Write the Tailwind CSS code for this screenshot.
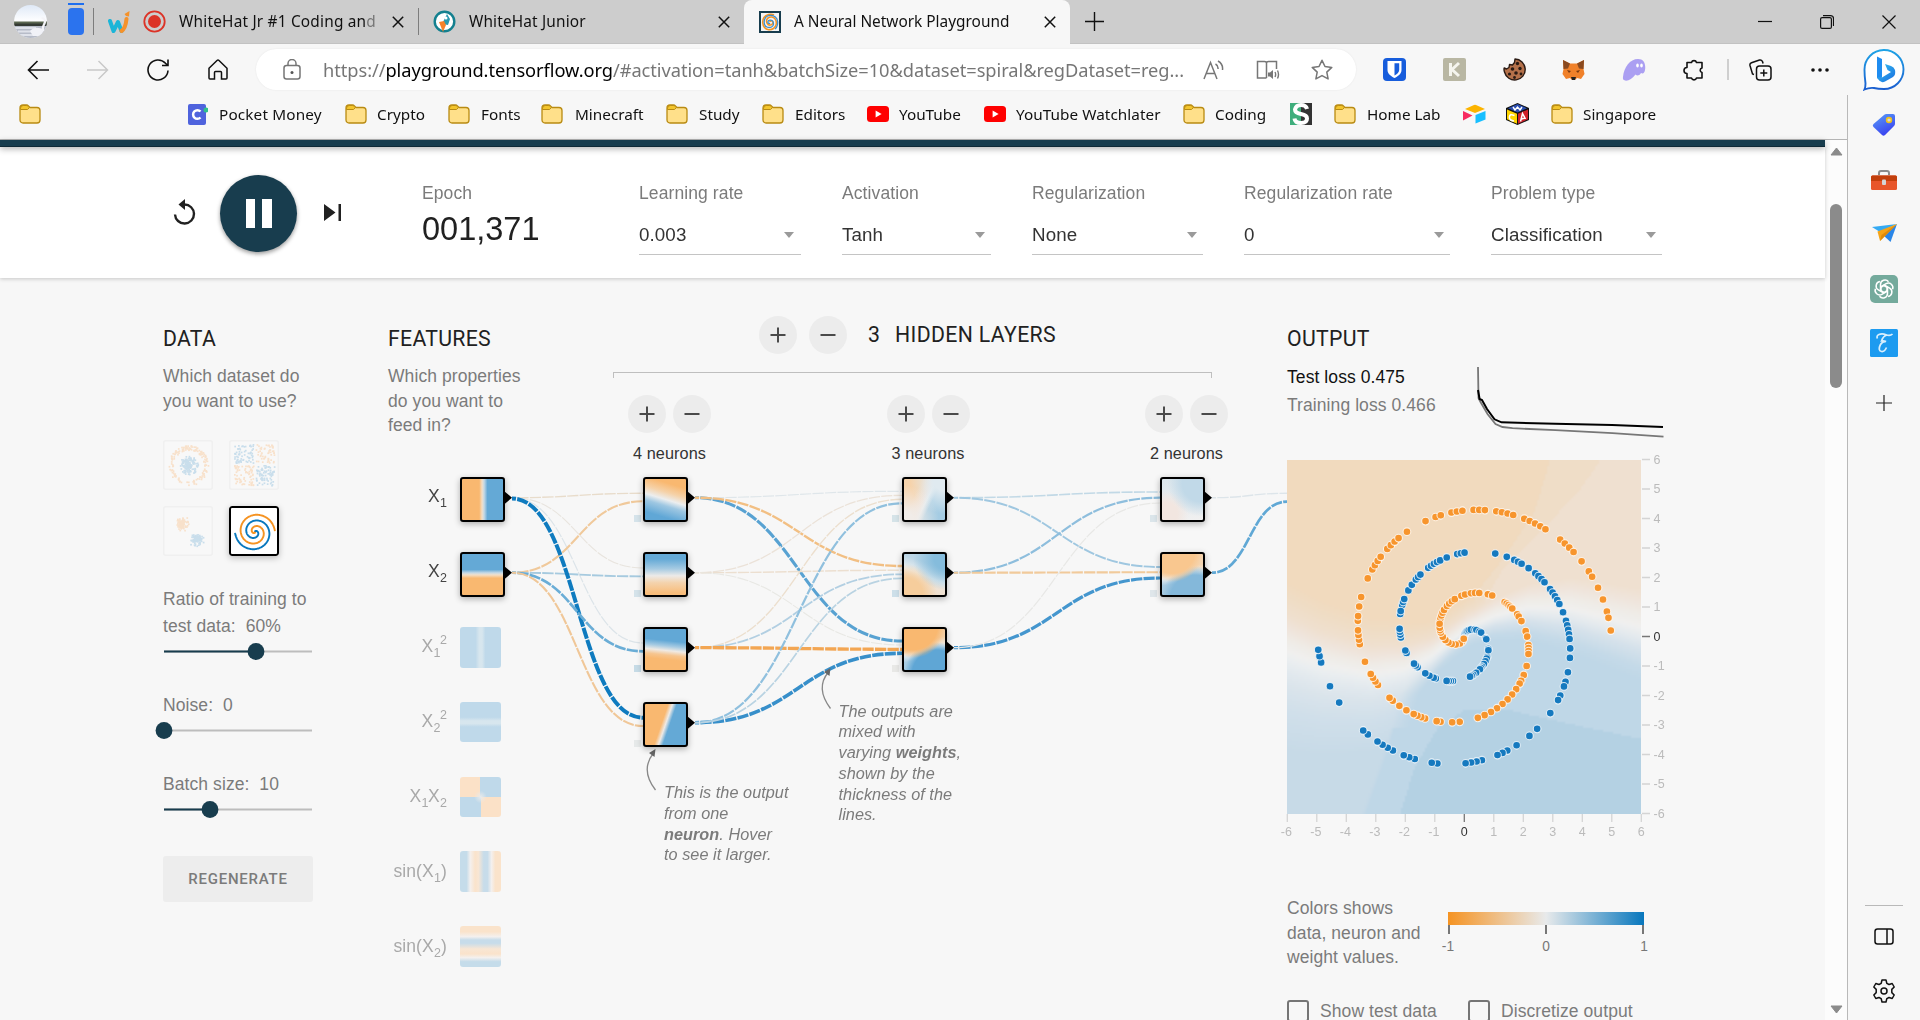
<!DOCTYPE html>
<html lang="en">
<head>
<meta charset="utf-8">
<title>A Neural Network Playground</title>
<script src="https://cdn.jsdelivr.net/npm/@tailwindcss/browser@4"></script>
</head>
<body class="w-[1920px] h-[1020px] overflow-hidden bg-[#f7f7f7] font-['Noto_Sans',sans-serif] text-black">
<svg class="hidden">
  <defs>
    <symbol id="folder" viewBox="0 0 22 20"><path d="M1 4a3 3 0 0 1 3-3h3.500c1 0 1.500.4 2.200 1.100L11 3.500h7a3 3 0 0 1 3 3V16a3 3 0 0 1-3 3H4a3 3 0 0 1-3-3z" fill="#ffe08a" stroke="#b98b12" stroke-width="1.300"/><path d="M1.500 4.200A2.700 2.700 0 0 1 4.200 1.500h3c1 0 1.500.3 2.200 1l1 1.200L8.500 5.500H1.500z" fill="#f3c52c" stroke="#b98b12" stroke-width="1"/></symbol>
    <symbol id="yt" viewBox="0 0 22 16"><rect width="22" height="16" rx="3.500" fill="#f00"/><path d="M8.600 4.500l6 3.500-6 3.500z" fill="#fff"/></symbol>
    <symbol id="x" viewBox="0 0 12 12"><path d="M.8.8l10.400 10.400M11.200.8L.8 11.200" stroke="#111" stroke-width="1.500"/></symbol>
    <symbol id="plus" viewBox="0 0 18 18"><path d="M9 1.500v15M1.500 9h15" stroke="#4a4a4a" stroke-width="2"/></symbol>
    <symbol id="minus" viewBox="0 0 18 18"><path d="M1.500 9h15" stroke="#4a4a4a" stroke-width="2"/></symbol>
    <symbol id="caret" viewBox="0 0 10 6"><path d="M0 0h10L5 6z" fill="#9a9a9a"/></symbol>
  </defs>
</svg>
<div class="flex flex-col h-full">

  <!-- Tab strip -->
  <header class="flex items-center h-[44px] bg-[#cdcdcd] text-[15.4px] shrink-0 border-b border-[#c2c2c2] whitespace-nowrap text-[#111]">
    <svg class="ml-[14px] w-[33px] h-[33px] shrink-0" viewBox="0 0 33 33"><defs><clipPath id="av"><circle cx="16.500" cy="16.500" r="16.500"/></clipPath><linearGradient id="sky" x2="0" y2="1"><stop offset="0" stop-color="#dfe9f7"/><stop offset=".5" stop-color="#fff"/></linearGradient></defs><g clip-path="url(#av)"><rect width="33" height="33" fill="url(#sky)"/><path d="M0 16.500h33v3H0z" fill="#5a6650"/><path d="M0 18.500h33v2.500H0z" fill="#343a33"/><rect y="21" width="33" height="14" fill="#b7bcc8"/><path d="M0 23h22M4 26.500h24M3 30h24" stroke="#dfe2ea" stroke-width="2"/><path d="M27.500 13c3.500 0 4 3 3 5.500s-3 4.500-1 7.500" stroke="#f4f4f8" stroke-width="2.200" fill="none"/><path d="M16 26c3-4 9-4.500 14-1l-3 6h-8z" fill="#f1f2f7"/></g></svg>
    <svg class="ml-[21px] mt-[-5px] w-[16px] h-[33px] shrink-0" viewBox="0 0 16 33"><rect y="0" width="16" height="2" fill="#1f6fef"/><rect y="5" width="16" height="27" rx="4" fill="#2b73ee"/></svg>
    <div class="ml-[9px] w-px h-[27px] bg-[#7d7d7d]"></div>
    <svg class="ml-[14px] w-[22px] h-[23px] shrink-0" viewBox="0 0 22 23"><path d="M2 11l3.500 10 4.500-9 3.500 9" fill="none" stroke="#1bb5d8" stroke-width="4" stroke-linejoin="round" stroke-linecap="round"/><path d="M13.500 21c3-2 4.500-7 5-12" stroke="#f5922b" stroke-width="4" stroke-linecap="round" fill="none"/><path d="M16.500 4l5-3-.5 5.500-3-.5z" fill="#f5922b"/></svg>
    <svg class="ml-[13px] w-[23px] h-[23px] shrink-0" viewBox="0 0 23 23"><circle cx="11.500" cy="11.500" r="10.200" fill="none" stroke="#dc3327" stroke-width="1.800"/><circle cx="11.500" cy="11.500" r="6.500" fill="#dc3327"/></svg>
    <span class="ml-[13px] w-[204px] tracking-[0.2px]">WhiteHat Jr #1 Coding an<span class="text-[#777]">d</span></span>
    <svg class="ml-[9px] w-[12px] h-[12px] shrink-0"><use href="#x"/></svg>
    <div class="ml-[14px] w-px h-[27px] bg-[#7d7d7d]"></div>
    <svg class="ml-[14px] w-[23px] h-[23px] shrink-0" viewBox="0 0 23 23"><circle cx="11.500" cy="11.500" r="9.800" fill="#fff" stroke="#14808f" stroke-width="2.400"/><path d="M9 14l5-10 3 5-2 6z" fill="#2a9ab0"/><path d="M6 12l5-1 2 4-3 7z" fill="#f5822b"/><circle cx="13" cy="8" r="1.500" fill="#fff"/></svg>
    <span class="ml-[13px] w-[240px] tracking-[0.15px]">WhiteHat Junior</span>
    <svg class="ml-[9px] w-[12px] h-[12px] shrink-0"><use href="#x"/></svg>
    <div class="ml-[14px] w-[326px] h-[44px] rounded-t-[8px] bg-[#f7f7f7] flex items-center shrink-0 mb-[-1px]">
      <svg class="ml-[15px] w-[22px] h-[22px] shrink-0" viewBox="0 0 22 22"><rect x="1" y="1" width="20" height="20" fill="#f4f4f4" stroke="#183d4e" stroke-width="2"/><path d="M11 11c0-2 3-1.500 3 .5s-3 3.500-5 2-2-5 0-6.500 6-1.500 7.500 1.500 1 7-2 9-7 1.500-9-1-2.500-7-.5-10 7-4 10-2.500" fill="none" stroke="#f59322" stroke-width="1.600"/><path d="M11 12c-1 1-2.500 0-2-1.500s3-2 4.500-.5 1.500 5-1 6-6 .5-7-2.500 0-7 3-8.500 8-.5 9.500 3 .5 8-2 10" fill="none" stroke="#3c8fd0" stroke-width="1.300"/></svg>
      <span class="ml-[13px] w-[244px]">A Neural Network Playground</span>
      <svg class="ml-[6px] w-[12px] h-[12px] shrink-0"><use href="#x"/></svg>
    </div>
    <svg class="ml-[15px] w-[19px] h-[19px] shrink-0" viewBox="0 0 19 19"><path d="M9.500 0v19M0 9.500h19" stroke="#111" stroke-width="1.400"/></svg>
    <div class="ml-auto flex items-center pr-[24px] gap-[48px]">
      <svg class="w-[14px] h-[14px]" viewBox="0 0 14 14"><path d="M0 6.500h14" stroke="#111" stroke-width="1.200"/></svg>
      <svg class="w-[14px] h-[14px]" viewBox="0 0 14 14"><rect x=".6" y="2.600" width="10.800" height="10.800" rx="1.500" fill="none" stroke="#111" stroke-width="1.200"/><path d="M3 .6h7.500a3 3 0 0 1 3 3V11" fill="none" stroke="#111" stroke-width="1.200"/></svg>
      <svg class="w-[14px] h-[14px]" viewBox="0 0 14 14"><path d="M.5.500l13 13M13.500.500l-13 13" stroke="#111" stroke-width="1.200"/></svg>
    </div>
  </header>

  <!-- Toolbar -->
  <div class="flex items-center h-[51px] shrink-0 relative">
    <svg class="ml-[27px] w-[22px] h-[20px]" viewBox="0 0 22 20"><path d="M22 10H1.500M10.500 1L1.500 10l9 9" fill="none" stroke="#111" stroke-width="1.600"/></svg>
    <svg class="ml-[38px] w-[22px] h-[20px]" viewBox="0 0 22 20"><path d="M0 10h20.500M11.500 1l9 9-9 9" fill="none" stroke="#c9c9c9" stroke-width="1.500"/></svg>
    <svg class="ml-[38px] w-[22px] h-[22px]" viewBox="0 0 22 22"><path d="M21 11.500a10 10 0 1 1-2.500-7.200l2 2M21 .5v6h-6" fill="none" stroke="#111" stroke-width="1.600"/></svg>
    <svg class="ml-[39px] w-[20px] h-[21px]" viewBox="0 0 20 21"><path d="M1 9.300L9 1.500q1-.9 2 0l8 7.800V19a1 1 0 0 1-1 1h-4.500v-6.500a1 1 0 0 0-1-1h-5a1 1 0 0 0-1 1V20H2a1 1 0 0 1-1-1z" fill="none" stroke="#111" stroke-width="1.500"/></svg>
    <div class="ml-[28px] w-[1100px] h-[41px] rounded-full bg-white flex items-center shadow-[0_0_2px_rgba(0,0,0,0.08)] shrink-0">
      <svg class="ml-[27px] w-[18px] h-[21px] shrink-0" viewBox="0 0 18 21"><rect x="1" y="6.500" width="16" height="13.500" rx="2.500" fill="none" stroke="#767676" stroke-width="1.500"/><path d="M5 6.500V4.500a4 4 0 0 1 8 0v2" fill="none" stroke="#767676" stroke-width="1.500"/><circle cx="9" cy="13.500" r="1.500" fill="#555"/></svg>
      <span class="ml-[22px] w-[868px] text-[18.25px] tracking-[-0.055px] text-[#767676] whitespace-nowrap">https://<span class="text-black">playground.tensorflow.org</span>/#activation=tanh&amp;batchSize=10&amp;dataset=spiral&amp;regDataset=reg...</span>
      <svg class="ml-[12px] w-[21px] h-[20px] shrink-0" viewBox="0 0 21 20"><path d="M1 19L7.500 2.500 14 19M3.200 13.500h8.600M12.500 4a5 5 0 0 1 2.500 5M15 1a9 9 0 0 1 4.500 9" fill="none" stroke="#767676" stroke-width="1.500"/></svg>
      <svg class="ml-[32px] w-[24px] h-[20px] shrink-0" viewBox="0 0 24 20"><path d="M10.500 18H1.500V1.500h7q2 0 2 1.500V18M10.500 3q0-1.500 2-1.500h8V9" fill="none" stroke="#767676" stroke-width="1.500"/><path d="M12 12.500h2l3-2.500v9l-3-2.500h-2z" fill="#767676"/><path d="M19 12q1.300 2.500 0 5M21.500 10.500q2 4 0 8" fill="none" stroke="#767676" stroke-width="1.400"/></svg>
      <svg class="ml-[31px] w-[22px] h-[21px] shrink-0" viewBox="0 0 22 21"><path d="M11 1.300l3 6.200 6.800.9-5 4.700 1.300 6.800-6.100-3.300-6.100 3.300 1.300-6.800-5-4.700 6.800-.9z" fill="none" stroke="#767676" stroke-width="1.500" stroke-linejoin="round"/></svg>
    </div>
    <svg class="ml-[27px] w-[23px] h-[23px]" viewBox="0 0 23 23"><rect width="23" height="23" rx="4" fill="#175ddc"/><path d="M4.500 3h14v9c0 4-4 6.500-7 8-3-1.500-7-4-7-8z" fill="#fff"/><path d="M11.500 5.200h4.700V12c0 2.500-2.500 4.500-4.700 5.600z" fill="#175ddc"/></svg>
    <svg class="ml-[37px] w-[23px] h-[23px]" viewBox="0 0 23 23"><rect width="23" height="23" rx="2" fill="#b9b7a3"/><path d="M7.500 5v13M16 5l-7 6.500L16 18" stroke="#f5f5ee" stroke-width="3" fill="none"/></svg>
    <svg class="ml-[37px] w-[23px] h-[23px]" viewBox="0 0 23 23"><path d="M12 1a10.500 10.500 0 1 1-10.500 13q-.8-2-.3-4l2.300 1 2.500-1.500.5-3 3 .5 2-2.500z" fill="#b5714a" stroke="#2b1b14" stroke-width="1.400" stroke-linejoin="round"/><g fill="#2b1b14"><circle cx="14.500" cy="5.500" r="1.700"/><circle cx="9.500" cy="11" r="1.800"/><circle cx="17" cy="10.500" r="1.700"/><circle cx="13" cy="15" r="1.800"/><circle cx="6.500" cy="16" r="1.600"/><circle cx="18" cy="16" r="1.400"/><circle cx="11.500" cy="19.500" r="1.400"/></g></svg>
    <svg class="ml-[36px] w-[23px] h-[22px]" viewBox="0 0 23 22"><path d="M1 1l7 3.500h7L22 1l-.5 9 1 5-3.500 5-4-1-2 2h-3l-2-2-4 1-3.500-5 1-5z" fill="#f0812a"/><path d="M1 1l7 3.500-2 5L1.500 10zM22 1l-7 3.500 2 5 4.500.5z" fill="#8a4a20"/><path d="M9 18h5l-1 3h-3z" fill="#222"/><path d="M5 11l4 1-2 2zM18 11l-4 1 2 2z" fill="#7a3a10"/></svg>
    <svg class="ml-[37px] w-[24px] h-[23px]" viewBox="0 0 24 23"><path d="M1 19C2 9 8 1 16 1c6 0 8 5 7 11-.5 3-2 4-4 3-2 3-4 3-5.500 1.500C10 21 5 24 2 22c-1-.5-1.200-1.500-1-3z" fill="#ab9ff2"/><ellipse cx="15.500" cy="7.500" rx="1.300" ry="2" fill="#fff"/><ellipse cx="19.500" cy="7.500" rx="1.300" ry="2" fill="#fff"/></svg>
    <svg class="ml-[37px] w-[22px] h-[22px]" viewBox="0 0 22 22"><path d="M4 3.500h4.500a2.600 2.600 0 0 1 5 0H19v5.500a2.300 2.300 0 0 0 0 4.500V19h-5.500a2.600 2.600 0 0 1-5 0H4v-4.500a3 3 0 1 1 0-6z" fill="none" stroke="#111" stroke-width="1.600" stroke-linejoin="round"/></svg>
    <div class="ml-[22px] w-[2px] h-[21px] bg-[#cfcfcf]"></div>
    <svg class="ml-[20px] w-[23px] h-[22px]" viewBox="0 0 23 22"><rect x="7.500" y="7" width="14.500" height="14" rx="3" fill="none" stroke="#111" stroke-width="1.500"/><path d="M14.800 10.500v7M11.300 14h7M5 15.500l-1.500-.5L1 6.500Q.5 4.500 2.500 3.700L10.500 1q2-.5 3 1.500l.6 2" fill="none" stroke="#111" stroke-width="1.500"/></svg>
    <svg class="ml-[39px] w-[18px] h-[4px]" viewBox="0 0 18 4"><g fill="#111"><circle cx="2" cy="2" r="1.800"/><circle cx="9" cy="2" r="1.800"/><circle cx="16" cy="2" r="1.800"/></g></svg>
    <svg class="absolute left-[1863px] top-[5px] w-[42px] h-[42px]" viewBox="0 0 42 42"><defs><linearGradient id="bg1" x2="0" y2="1"><stop offset="0" stop-color="#1fa3e6"/><stop offset="1" stop-color="#1c5fd0"/></linearGradient><linearGradient id="bg2" x2="1" y2="1"><stop offset="0" stop-color="#36c5f0"/><stop offset="1" stop-color="#1a6be0"/></linearGradient></defs><path d="M1.500 40.500q1-2 1-6Q1.500 27 1.500 21A19.500 19.500 0 1 1 21 40q-6 0-10-1-5-.5-9.500 1.500z" fill="#fff" stroke="url(#bg1)" stroke-width="1.900"/><path d="M14 7.500l5 2.500v18l-2 4-3-3z" fill="#1f8cf0"/><path d="M14 28l3 4q2 2 5 .5L30 28q3-2 2-7-1-3-4-4l-6-2 2.500 6 3.500 2-9 5.500z" fill="url(#bg2)"/></svg>
  </div>

  <div class="flex grow min-h-0">
    <div class="w-[1847px] flex flex-col shrink-0">
      <!-- Bookmarks -->
      <nav class="flex items-center h-[45px] pb-[6px] shrink-0 text-[15.3px] text-[#111] whitespace-nowrap border-b border-[#b4b4b4]">
        <svg class="ml-[19px] w-[22px] h-[20px]"><use href="#folder"/></svg>
        <div class="flex items-center ml-[147px]"><svg class="w-[20px] h-[21px]" viewBox="0 0 20 21"><rect width="18" height="21" rx="2" fill="#4f63dd"/><path d="M12.500 7.500a4.300 4.300 0 1 0 0 6" fill="none" stroke="#fff" stroke-width="2.500"/><circle cx="18" cy="6" r="2.500" fill="#2fc08c"/></svg><span class="ml-[11px] w-[103px] tracking-[0.15px]">Pocket Money</span></div>
        <div class="flex items-center ml-[23px]"><svg class="w-[22px] h-[20px]"><use href="#folder"/></svg><span class="ml-[10px] w-[49px]">Crypto</span></div>
        <div class="flex items-center ml-[22px]"><svg class="w-[22px] h-[20px]"><use href="#folder"/></svg><span class="ml-[11px] w-[39px]">Fonts</span></div>
        <div class="flex items-center ml-[21px]"><svg class="w-[22px] h-[20px]"><use href="#folder"/></svg><span class="ml-[12px] w-[68px]">Minecraft</span></div>
        <div class="flex items-center ml-[23px]"><svg class="w-[22px] h-[20px]"><use href="#folder"/></svg><span class="ml-[11px] w-[41px]">Study</span></div>
        <div class="flex items-center ml-[22px]"><svg class="w-[22px] h-[20px]"><use href="#folder"/></svg><span class="ml-[11px] w-[49px]">Editors</span></div>
        <div class="flex items-center ml-[23px]"><svg class="w-[22px] h-[16px]"><use href="#yt"/></svg><span class="ml-[10px] w-[62px]">YouTube</span></div>
        <div class="flex items-center ml-[23px]"><svg class="w-[22px] h-[16px]"><use href="#yt"/></svg><span class="ml-[10px] w-[144px] tracking-[0.05px]">YouTube Watchlater</span></div>
        <div class="flex items-center ml-[23px]"><svg class="w-[22px] h-[20px]"><use href="#folder"/></svg><span class="ml-[10px] w-[52px]">Coding</span></div>
        <svg class="ml-[23px] w-[22px] h-[22px]" viewBox="0 0 22 22"><rect width="22" height="22" fill="#3fae7c"/><path d="M11 0h11v22H11z" fill="#333"/><path d="M17 6q-1-4-6-4T5 6.500Q5 10 11 11t6 4.500Q17 20 11 20t-6.500-4.500" fill="none" stroke="#fff" stroke-width="4"/></svg>
        <div class="flex items-center ml-[22px]"><svg class="w-[22px] h-[20px]"><use href="#folder"/></svg><span class="ml-[11px] w-[73px]">Home Lab</span></div>
        <svg class="ml-[23px] w-[23px] h-[20px]" viewBox="0 0 23 20"><path d="M2 5l9-4q1-.5 2 0l9 4-10 4z" fill="#fcb400"/><path d="M12.500 11L22.500 7v8.500l-10 4z" fill="#18bfff"/><path d="M0 7l9.500 4.500L0 16.500z" fill="#f82b60"/></svg>
        <svg class="ml-[20px] w-[23px] h-[22px]" viewBox="0 0 23 22"><path d="M11.500 0L23 5v12l-11.500 5L0 17V5z" fill="#111"/><path d="M11.500 1L21 5.300l-9.500 4.200L2 5.300z" fill="#2a4db0"/><path d="M1 6.500l10 4.300v10L1 16.300z" fill="#ffd500"/><path d="M22 6.500l-10 4.300v10l10-4.500z" fill="#d0212a"/><path d="M7 4l2 3 2.500-3L14 7l2-3" stroke="#fff" stroke-width="1.400" fill="none"/><path d="M8.500 12.500L5 11.500q-2 1-1.500 3.500t4.500 3M14.500 18.500l2-8 3 5.500M15.500 16l3.500-1" stroke="#fff" stroke-width="1.500" fill="none"/></svg>
        <div class="flex items-center ml-[22px]"><svg class="w-[22px] h-[20px]"><use href="#folder"/></svg><span class="ml-[10px] w-[75px]">Singapore</span></div>
      </nav>

      <div class="flex grow min-h-0 font-['Liberation_Sans',Arial,sans-serif]">
        <div class="w-[1825px] shrink-0 flex flex-col">
          <div class="h-[7px] bg-[#183d4e] shrink-0 shadow-[0_2px_6px_rgba(0,0,0,0.3)] relative z-10 border-b border-[#0f2a37]"></div>

          <!-- Run controls -->
          <section class="h-[131px] shrink-0 bg-white flex shadow-[0_1px_4px_rgba(0,0,0,0.2)] text-[17.5px] tracking-[0.1px] text-[#7b7b7b] relative">
            <svg class="ml-[173px] mt-[52px] w-[23px] h-[27px] shrink-0" viewBox="0 0 23 27"><path d="M11.500 5.500A9.500 9.500 0 1 1 2 15.500" fill="none" stroke="#212121" stroke-width="2.400"/><path d="M12 0v11L5.500 5.500z" fill="#212121"/></svg>
            <div class="ml-[24px] mt-[28px] w-[77px] h-[77px] rounded-full bg-[#183d4e] shadow-[0_2px_4px_rgba(0,0,0,0.4)] flex items-center justify-center gap-[7px] shrink-0 pb-[1px]">
              <div class="w-[9.5px] h-[29px] bg-white"></div><div class="w-[9.5px] h-[29px] bg-white"></div>
            </div>
            <svg class="ml-[27px] mt-[57px] w-[17px] h-[17px] shrink-0" viewBox="0 0 17 17"><path d="M0 0l11.500 8.500L0 17zM14.500 0H17v17h-2.500z" fill="#212121"/></svg>
            <div class="ml-[81px] mt-[34px] w-[217px]"><div class="leading-[24px]">Epoch</div><div class="mt-[4px] text-[32.5px] leading-[40px] text-[#212121] tracking-[0px]">001,371</div></div>
            <div class="mt-[34px] w-[162px] h-[74px] border-b border-[#c4c4c4]"><div class="leading-[24px]">Learning rate</div><div class="mt-[18px] flex items-center justify-between pr-[7px] text-[18.75px] leading-[24px] text-[#333]">0.003<svg class="w-[10px] h-[6px]"><use href="#caret"/></svg></div></div>
            <div class="ml-[41px] mt-[34px] w-[149px] h-[74px] border-b border-[#c4c4c4]"><div class="leading-[24px]">Activation</div><div class="mt-[18px] flex items-center justify-between pr-[6px] text-[18.75px] leading-[24px] text-[#333]">Tanh<svg class="w-[10px] h-[6px]"><use href="#caret"/></svg></div></div>
            <div class="ml-[41px] mt-[34px] w-[171px] h-[74px] border-b border-[#c4c4c4]"><div class="leading-[24px]">Regularization</div><div class="mt-[18px] flex items-center justify-between pr-[6px] text-[18.75px] leading-[24px] text-[#333]">None<svg class="w-[10px] h-[6px]"><use href="#caret"/></svg></div></div>
            <div class="ml-[41px] mt-[34px] w-[206px] h-[74px] border-b border-[#c4c4c4]"><div class="leading-[24px]">Regularization rate</div><div class="mt-[18px] flex items-center justify-between pr-[6px] text-[18.75px] leading-[24px] text-[#333]">0<svg class="w-[10px] h-[6px]"><use href="#caret"/></svg></div></div>
            <div class="ml-[41px] mt-[34px] w-[171px] h-[74px] border-b border-[#c4c4c4]"><div class="leading-[24px]">Problem type</div><div class="mt-[18px] flex items-center justify-between pr-[6px] text-[18.75px] leading-[24px] text-[#333]">Classification<svg class="w-[10px] h-[6px]"><use href="#caret"/></svg></div></div>
          </section>

          <main class="relative flex grow min-h-0 overflow-hidden text-[17.5px] leading-[24.5px] tracking-[0.08px] text-[#7b7b7b] z-[-1]">
            <!-- Data column -->
            <section class="ml-[163px] w-[150px] shrink-0 pt-[47px]">
              <h2 class="font-[Roboto] text-[21.25px] tracking-[0.3px] leading-[28px] text-[#212121]">DATA</h2>
              <p class="mt-[11px] whitespace-nowrap">Which dataset do<br>you want to use?</p>
              <div class="mt-[27px] grid grid-cols-[50px_50px] gap-[16px]">
                <svg id="d-circle" class="w-[50px] h-[50px]" viewBox="0 0 50 50"></svg>
                <svg id="d-xor" class="w-[50px] h-[50px]" viewBox="0 0 50 50"></svg>
                <svg id="d-gauss" class="w-[50px] h-[50px]" viewBox="0 0 50 50"></svg>
                <svg id="d-spiral" class="w-[50px] h-[50px] rounded-[3px] shadow-[0_2px_6px_rgba(0,0,0,0.25)]" viewBox="0 0 50 50"></svg>
              </div>
              <p class="mt-[30px] leading-[27px] whitespace-nowrap">Ratio of training to<br>test data:&nbsp; 60%</p>
              <svg class="mt-[3px] w-[166px] h-[17px] ml-[-8px]" viewBox="0 0 166 17"><path d="M9 8.500h148" stroke="#bdbdbd" stroke-width="2.200"/><path d="M9 8.500h92" stroke="#183d4e" stroke-width="2.200"/><circle cx="101" cy="8.500" r="8.400" fill="#183d4e"/></svg>
              <p class="mt-[32px] leading-[27px]">Noise:&nbsp; 0</p>
              <svg class="mt-[3px] w-[166px] h-[17px] ml-[-8px]" viewBox="0 0 166 17"><path d="M9 8.500h148" stroke="#bdbdbd" stroke-width="2.200"/><circle cx="9" cy="8.500" r="8.400" fill="#183d4e"/></svg>
              <p class="mt-[32px] leading-[27px]">Batch size:&nbsp; 10</p>
              <svg class="mt-[3px] w-[166px] h-[17px] ml-[-8px]" viewBox="0 0 166 17"><path d="M9 8.500h148" stroke="#bdbdbd" stroke-width="2.200"/><path d="M9 8.500h46" stroke="#183d4e" stroke-width="2.200"/><circle cx="55" cy="8.500" r="8.400" fill="#183d4e"/></svg>
              <div class="mt-[38px] h-[46px] rounded-[3px] bg-[#ededed] flex items-center justify-center font-[Roboto] font-medium text-[15px] tracking-[0.75px]">REGENERATE</div>
            </section>

            <!-- Features column -->
            <section class="ml-[75px] w-[150px] shrink-0 pt-[47px]">
              <h2 class="font-[Roboto] text-[21.25px] tracking-[0.3px] leading-[28px] text-[#212121]">FEATURES</h2>
              <p class="mt-[11px] whitespace-nowrap">Which properties<br>do you want to<br>feed in?</p>
            </section>

            <!-- Hidden layers -->
            <section class="ml-[75px] w-[599px] shrink-0 pt-[38px]">
              <div class="flex items-center pl-[146px] font-[Roboto] text-[21.25px] tracking-[0.35px] leading-[28px] text-[#212121]">
                <div class="w-[38px] h-[38px] rounded-full bg-[#ececec] flex items-center justify-center"><svg class="w-[18px] h-[18px]"><use href="#plus"/></svg></div>
                <div class="ml-[12px] w-[38px] h-[38px] rounded-full bg-[#ececec] flex items-center justify-center"><svg class="w-[18px] h-[18px]"><use href="#minus"/></svg></div>
                <span class="ml-[21px] w-[27px]">3</span><span>HIDDEN LAYERS</span>
              </div>
              <div class="mt-[18px] h-[6px] border-t border-x border-[#bfbfbf]"></div>
              <div class="flex pl-[15px] gap-[175.5px] mt-[17px] text-[16.25px] leading-[22px] text-[#333] whitespace-nowrap">
                <div class="w-[83px] shrink-0"><div class="flex justify-between"><div class="w-[38px] h-[38px] rounded-full bg-[#ececec] flex items-center justify-center"><svg class="w-[18px] h-[18px]"><use href="#plus"/></svg></div><div class="w-[38px] h-[38px] rounded-full bg-[#ececec] flex items-center justify-center"><svg class="w-[18px] h-[18px]"><use href="#minus"/></svg></div></div><div class="mt-[9px] text-center">4 neurons</div></div>
                <div class="w-[83px] shrink-0"><div class="flex justify-between"><div class="w-[38px] h-[38px] rounded-full bg-[#ececec] flex items-center justify-center"><svg class="w-[18px] h-[18px]"><use href="#plus"/></svg></div><div class="w-[38px] h-[38px] rounded-full bg-[#ececec] flex items-center justify-center"><svg class="w-[18px] h-[18px]"><use href="#minus"/></svg></div></div><div class="mt-[9px] text-center">3 neurons</div></div>
                <div class="w-[83px] shrink-0"><div class="flex justify-between"><div class="w-[38px] h-[38px] rounded-full bg-[#ececec] flex items-center justify-center"><svg class="w-[18px] h-[18px]"><use href="#plus"/></svg></div><div class="w-[38px] h-[38px] rounded-full bg-[#ececec] flex items-center justify-center"><svg class="w-[18px] h-[18px]"><use href="#minus"/></svg></div></div><div class="mt-[9px] text-center">2 neurons</div></div>
              </div>
            </section>

            <!-- Output -->
            <section class="ml-[75px] w-[400px] shrink-0 pt-[47px]">
              <div class="flex">
                <div class="w-[187px] shrink-0 whitespace-nowrap">
                  <h2 class="font-[Roboto] text-[21.25px] tracking-[0.3px] leading-[28px] text-[#212121]">OUTPUT</h2>
                  <p class="mt-[10px] leading-[28px] text-[#111]">Test loss 0.475</p>
                  <p class="leading-[28px]">Training loss 0.466</p>
                </div>
                <svg class="mt-[35px] ml-[3px] w-[190px] h-[84px]" viewBox="1477 360 190 84"><path d="M1478 367l.5 31 2 4 7 12 8 10 7 3 10 1.200 43 2 57 3 51 3.400" fill="none" stroke="#777" stroke-width="1.800"/><path d="M1478 390l1.600 9 2.400 1 5 9 7.500 10.300 7 3 53.500 1.400 57 1.400 51 2" fill="none" stroke="#000" stroke-width="2"/></svg>
              </div>
              <div class="mt-[16px] flex">
                <div class="relative w-[354px] h-[354px] shrink-0">
                  <canvas id="heat" class="w-[354px] h-[354px] block" width="177" height="177"></canvas>
                  <svg id="dots" class="absolute inset-0 w-[354px] h-[354px]" viewBox="-6 -6 12 12"></svg>
                </div>
              </div>
              <div class="mt-[82px] flex">
                <p class="w-[145px] whitespace-nowrap">Colors shows<br>data, neuron and<br>weight values.</p>
                <svg class="mt-[16px] w-[225px] h-[44px]" viewBox="0 0 225 44"><defs><linearGradient id="leg"><stop offset="0" stop-color="#f59322"/><stop offset=".5" stop-color="#e8eaeb"/><stop offset="1" stop-color="#0877bd"/></linearGradient></defs><rect x="16" width="196" height="13" fill="url(#leg)"/><path d="M17 13v9M114 13v9M211 13v9" stroke="#777" stroke-width="2"/><g font-size="13.750" fill="#777" text-anchor="middle"><text x="16" y="39">-1</text><text x="114" y="39">0</text><text x="212" y="39">1</text></g></svg>
              </div>
              <div class="mt-[29px] flex items-center whitespace-nowrap">
                <div class="w-[22px] h-[22px] border-2 border-[#757575] rounded-[3px]"></div><span class="ml-[11px] w-[148px]">Show test data</span>
                <div class="w-[22px] h-[22px] border-2 border-[#757575] rounded-[3px]"></div><span class="ml-[11px]">Discretize output</span>
              </div>
            </section>

            <!-- Network diagram -->
            <svg id="net" class="absolute left-0 top-0 w-[1825px] h-[742px] pointer-events-none" viewBox="0 278 1825 742"></svg>
            <div class="absolute left-[460px] top-[199px] w-[45px] h-[45px] rounded-[3px] border-2 border-black shadow-[0_2px_6px_rgba(0,0,0,0.3)] bg-[linear-gradient(90deg,#f9b870_42%,#f3dfc8_49%,#c5d9e6_54%,#64a9d6_62%)]"></div>
            <div class="absolute left-[460px] top-[274px] w-[45px] h-[45px] rounded-[3px] border-2 border-black shadow-[0_2px_6px_rgba(0,0,0,0.3)] bg-[linear-gradient(180deg,#64a9d6_38%,#c5d9e6_46%,#f3dfc8_51%,#f9b870_59%)]"></div>
            <div class="absolute left-[460px] top-[349px] w-[41px] h-[41px] rounded-[3px] bg-[linear-gradient(90deg,#bfd9ea_38%,#d7e6ee_47%,#d7e6ee_54%,#bfd9ea_62%)]"></div>
            <div class="absolute left-[460px] top-[424px] w-[41px] h-[40px] rounded-[3px] bg-[linear-gradient(180deg,#bfd9ea_38%,#d7e6ee_47%,#d7e6ee_54%,#bfd9ea_62%)]"></div>
            <div class="absolute left-[460px] top-[499px] w-[41px] h-[40px] rounded-[3px] bg-[radial-gradient(circle,#e8eaeb_0,transparent_22%),conic-gradient(#bfd9ea_25%,#fbe1c7_25%_50%,#bfd9ea_50%_75%,#fbe1c7_75%)]"></div>
            <div class="absolute left-[460px] top-[573px] w-[41px] h-[41px] rounded-[3px] bg-[linear-gradient(90deg,#c5dcea_16%,#f4f0ee_25%,#fae3cb_37%,#f8e6d4_45%,#c7dcea_58%,#c7dcea_67%,#f4f0ee_77%,#fae3cb_86%)]"></div>
            <div class="absolute left-[460px] top-[648px] w-[41px] h-[41px] rounded-[3px] bg-[linear-gradient(180deg,#fae3cb_14%,#f4f0ee_26%,#c7dcea_34%,#c7dcea_42%,#f8e6d4_56%,#fae3cb_68%,#f4f0ee_77%,#c5dcea_87%)]"></div>

            <div class="absolute left-[643px] top-[199px] w-[45px] h-[45px] rounded-[3px] border-2 border-black shadow-[0_2px_6px_rgba(0,0,0,0.3)] bg-[linear-gradient(197deg,#f9b870_18%,#f5d2a9_36%,#eceeef_50%,#9ec7e2_62%,#60a7d6_84%)]"></div>
            <div class="absolute left-[643px] top-[274px] w-[45px] h-[45px] rounded-[3px] border-2 border-black shadow-[0_2px_6px_rgba(0,0,0,0.3)] bg-[linear-gradient(180deg,#64a9d6_12%,#a5cae2_36%,#eceae8_53%,#f4d3ad_70%,#f8bd7b_95%)]"></div>
            <div class="absolute left-[643px] top-[349px] w-[45px] h-[45px] rounded-[3px] border-2 border-black shadow-[0_2px_6px_rgba(0,0,0,0.3)] bg-[linear-gradient(186deg,#62a8d6_30%,#a5cae2_42%,#efeae4_52%,#f6c58f_62%,#f9b870_72%)]"></div>
            <div class="absolute left-[643px] top-[424px] w-[45px] h-[45px] rounded-[3px] border-2 border-black shadow-[0_2px_6px_rgba(0,0,0,0.3)] bg-[linear-gradient(109deg,#f9b870_42%,#eeeae6_50%,#64a9d6_58%)]"></div>

            <div class="absolute left-[902px] top-[199px] w-[45px] h-[45px] rounded-[3px] border-2 border-black shadow-[0_2px_6px_rgba(0,0,0,0.3)] bg-[radial-gradient(circle_at_0%_100%,#f1ece8_15%,transparent_60%),radial-gradient(circle_at_100%_0%,#e0eaf0_20%,transparent_60%),linear-gradient(116deg,#f6d3ab_30%,#f1e5dc_48%,#e8eef1_54%,#a5cce3_64%)]"></div>
            <div class="absolute left-[902px] top-[274px] w-[45px] h-[45px] rounded-[3px] border-2 border-black shadow-[0_2px_6px_rgba(0,0,0,0.3)] bg-[radial-gradient(circle_at_100%_10%,#85bcdc_20%,transparent_58%),radial-gradient(circle_at_5%_100%,#f6cd9c_30%,transparent_55%),linear-gradient(200deg,#bcd6e6_28%,#eef0f0_52%,#efe3d6_64%,#f0dcc4)]"></div>
            <div class="absolute left-[902px] top-[349px] w-[45px] h-[45px] rounded-[3px] border-2 border-black shadow-[0_2px_6px_rgba(0,0,0,0.3)] bg-[radial-gradient(circle_at_22%_-10%,#f9b870_45%,transparent_60%),radial-gradient(circle_at_80%_112%,#5fa6d5_44%,transparent_58%),linear-gradient(168deg,#f2cfa6_32%,#eef0f0_52%,#a9cde3_68%)]"></div>

            <div class="absolute left-[1160px] top-[199px] w-[45px] h-[45px] rounded-[3px] border-2 border-black shadow-[0_2px_6px_rgba(0,0,0,0.3)] bg-[radial-gradient(circle_at_95%_10%,#c1d9e8_35%,transparent_62%),radial-gradient(circle_at_10%_85%,#f2e6e0_22%,transparent_45%),linear-gradient(180deg,#dce6ec,#f0f0f0)]"></div>
            <div class="absolute left-[1160px] top-[274px] w-[45px] h-[45px] rounded-[3px] border-2 border-black shadow-[0_2px_6px_rgba(0,0,0,0.3)] bg-[radial-gradient(circle_at_25%_-8%,#f9c78f_42%,transparent_58%),radial-gradient(circle_at_80%_112%,#84b8da_44%,transparent_60%),linear-gradient(172deg,#f4d5b2_34%,#eef0f0_52%,#a9cbe1_68%)]"></div>

            <p class="absolute left-[664px] top-[504px] italic text-[16.25px] leading-[20.8px] tracking-[0.04px] whitespace-nowrap">This is the output<br>from one<br><b>neuron</b>. Hover<br>to see it larger.</p>
            <p class="absolute left-[838.5px] top-[422.5px] italic text-[16.25px] leading-[20.8px] tracking-[0.04px] whitespace-nowrap">The outputs are<br>mixed with<br>varying <b>weights</b>,<br>shown by the<br>thickness of the<br>lines.</p>
          </main>
        </div>
        <!-- Scrollbar -->
        <div class="w-[22px] bg-[#fcfcfc] flex flex-col items-center">
          <svg class="mt-[7px] w-[13px] h-[9px]" viewBox="0 0 13 9"><path d="M6.500 1l5.500 7H1z" fill="#8b8b8b" stroke="#8b8b8b" stroke-linejoin="round"/></svg>
          <div class="mt-[48px] w-[12px] h-[184px] rounded-full bg-[#8b8b8b]"></div>
          <svg class="mt-auto mb-[6px] w-[13px] h-[9px]" viewBox="0 0 13 9"><path d="M6.500 8L1 1h11z" fill="#8b8b8b" stroke="#8b8b8b" stroke-linejoin="round"/></svg>
        </div>
      </div>
    </div>

    <!-- Edge sidebar -->
    <aside class="w-[73px] border-l border-[#b9b9b9] flex flex-col items-center">
      <svg class="mt-[18px] w-[24px] h-[24px]" viewBox="0 0 24 24"><defs><linearGradient id="tg" x2=".5" y2="1"><stop offset="0" stop-color="#5aa0f7"/><stop offset="1" stop-color="#3a43f0"/></linearGradient></defs><path d="M12 2q1-1 2.500-1H21q2 0 2 2v7.500q0 1.500-1 2.500l-9 9q-1.500 1.500-3 0l-8.500-8q-1.500-1.500 0-3z" fill="url(#tg)"/><circle cx="17" cy="7" r="2.400" fill="#d7d5e8" stroke="#f0c419" stroke-width="1.600"/></svg>
      <svg class="mt-[33px] w-[26px] h-[20px]" viewBox="0 0 26 20"><path d="M8 5V3q0-2 2-2h6q2 0 2 2v2" fill="none" stroke="#8b8b8b" stroke-width="2"/><rect x="0" y="5.500" width="26" height="14.500" rx="1.500" fill="#e8562a"/><path d="M0 7q0-1.500 1.500-1.500h23Q26 5.500 26 7v4H0z" fill="#c23f0c"/><rect x="11" y="9.500" width="4" height="5.500" rx="1" fill="#d5d5d5"/></svg>
      <svg class="mt-[34px] w-[25px] h-[19px]" viewBox="0 0 25 19"><path d="M0 3L25 0 8 8z" fill="#35aaf3"/><path d="M25 0L18.500 18 11 11z" fill="#2a86e8"/><path d="M25 0L8 17 5.500 7.500z" fill="#f6a417"/><path d="M25 0L8 17l1.500-6z" fill="#e08a0a"/></svg>
      <svg class="mt-[32px] w-[28px] h-[28px]" viewBox="0 0 28 28"><path d="M5 0h18a5 5 0 0 1 5 5v23H5a5 5 0 0 1-5-5V5a5 5 0 0 1 5-5z" fill="#74aa9c"/><g fill="none" stroke="#fff" stroke-width="1.500"><path id="pt" d="M14 10.500L17.500 12.500V18.500a4.500 4.500 0 0 1-8 2.800"/><use href="#pt" transform="rotate(60 14 14)"/><use href="#pt" transform="rotate(120 14 14)"/><use href="#pt" transform="rotate(180 14 14)"/><use href="#pt" transform="rotate(240 14 14)"/><use href="#pt" transform="rotate(300 14 14)"/></g></svg>
      <svg class="mt-[26px] w-[28px] h-[28px]" viewBox="0 0 28 28"><rect width="28" height="28" rx="1.500" fill="#1d9bf0"/><path d="M7.500 9.500Q6 7 9 5.500t7 .2 6.500-.7M17 6q-4 1-5.500 6 2.500-.5 4.500.5-4 0-5.500 3-3 6 1 7 3 .5 5-4" fill="none" stroke="#d9effd" stroke-width="1.700"/></svg>
      <svg class="mt-[38px] w-[16px] h-[16px]" viewBox="0 0 16 16"><path d="M8 0v16M0 8h16" stroke="#222" stroke-width="1.200"/></svg>
      <div class="mt-auto w-[38px] h-px bg-[#b9b9b9]"></div>
      <svg class="mt-[22px] w-[20px] h-[17px]" viewBox="0 0 20 17"><rect x="1" y="1" width="18" height="15" rx="2.500" fill="none" stroke="#111" stroke-width="1.500"/><path d="M13 1v15" stroke="#111" stroke-width="1.500"/></svg>
      <svg class="mt-[34px] mb-[17px] w-[24px] h-[24px]" viewBox="0 0 24 24"><path id="gear" d="M10 1h4l.8 3.300 2.200 1.200 3.200-1 2 3.500-2.400 2.400v3.200l2.400 2.400-2 3.500-3.200-1-2.200 1.200L14 23h-4l-.8-3.300L7 18.500l-3.200 1-2-3.500 2.400-2.400v-3.200L1.800 8l2-3.500 3.200 1 2.200-1.200z" fill="none" stroke="#111" stroke-width="1.500" stroke-linejoin="round"/><circle cx="12" cy="12" r="3" fill="none" stroke="#111" stroke-width="1.500"/></svg>
    </aside>
  </div>
</div>

<script>
// --- Network links: [x0, y0, x1, y1, colour, width] ---
const L = [
 [512,497.7,643,493.3,'#e8dccb',1.400],[512,497.7,643,568,'#e8e4de',1.100],[512,497.7,643,643,'#dce4e9',1.200],
 [512,572.7,643,501.3,'#f0c99b',2.100],[512,572.7,643,576.3,'#a6cadf',1.800],
 [512,498.5,643,717.7,'#0f7bbf',4],[512,572.7,643,651.3,'#6aadd6',2.700],[512,572.7,643,726,'#f0c798',2.100],
 [695,497.7,902,491.3,'#dfe6ea',1.200],[695,497.7,902,641,'#58a2d2',3.100],[695,497.7,902,566,'#f2bf83',2.400],
 [695,572.7,902,495.3,'#ebe2d8',1.300],[695,572.7,902,570.3,'#ecdfd0',1.400],[695,572.7,902,645,'#e8e8e4',1.100],
 [695,647.7,902,499.3,'#ecdfce',1.400],[695,647.7,902,574.3,'#b2cfe2',1.800],[695,647.7,902,649.3,'#f3a653',3.300],
 [695,722.7,902,653.3,'#378fca',3.600],[695,722.7,902,503.3,'#90c0de',2.200],[695,722.7,902,578.3,'#b9d3e2',1.700],
 [954,497.7,1160,492,'#c2d9e6',1.600],[954,497.7,1160,567,'#9fc7e0',2],[954,572.7,1160,497.7,'#8ebedd',2.200],
 [954,572.7,1160,572.3,'#f1ca9b',2.100],[954,647.7,1160,578,'#4496ce',3.200],[954,647.7,1160,503,'#e8e8e6',1.200],
 [1212,497.7,1287,493.3,'#dde5ea',1.400],[1212,572.7,1287,501.7,'#60a8d5',2.700]
];
let s = '<g fill="none" stroke-dasharray="11.250 1.250" stroke-dashoffset="7.300">';
for (const [a,b,c,d,k,w] of L) { const m=(a+c)/2; s += `<path d="M${a},${b}C${m},${b} ${m},${d} ${c},${d}" stroke="${k}" stroke-width="${w}"/>`; }
s += '</g>';
for (const [x,n] of [[505,2],[688,4],[947,3],[1205,2]])
  for (let i=0;i<n;i++) s += `<path d="M${x-1},${491+75*i}l8,6.700l-8,6.700z" fill="#000"/>`;
[[634,0,'#d5e3ea'],[634,1,'#d5e3ea'],[634,2,'#c6dbe6'],[634,3,'#e6e9e9'],[892,0,'#d5e3e8'],[892,1,'#cddfe9'],[892,2,'#e8e8e6'],[1150,0,'#dbe5ea'],[1150,1,'#dfe6ea']]
  .forEach(([x,i,c]) => s += `<rect x="${x}" y="${515+75*i}" width="7" height="7" fill="${c}"/>`);
// feature names
const lab=(y,t,c)=> s += `<g font-size="17.500" fill="${c}">${t.map(([x,dy,z,v])=>`<text x="${x}" y="${y+dy}" font-size="${z}">${v}</text>`).join('')}</g>`;
lab(501.5,[[428,0,17.5,'X'],[440,5.5,12.5,'1']],'#444');
lab(576.5,[[428,0,17.5,'X'],[440,5.5,12.5,'2']],'#444');
lab(651.5,[[421.5,0,17.5,'X'],[433.5,5.5,12.5,'1'],[440,-8,12.5,'2']],'#a9a9a9');
lab(726.5,[[421.5,0,17.5,'X'],[433.5,5.5,12.5,'2'],[440,-8,12.5,'2']],'#a9a9a9');
lab(801.5,[[409.5,0,17.5,'X'],[421.5,5.5,12.5,'1'],[428,0,17.5,'X'],[440,5.5,12.5,'2']],'#a9a9a9');
lab(876.5,[[393.5,0,17.5,'sin(X'],[434,5.5,12.5,'1'],[441,0,17.5,')']],'#a9a9a9');
lab(951.5,[[393.5,0,17.5,'sin(X'],[434,5.5,12.5,'2'],[441,0,17.5,')']],'#a9a9a9');
// callout arrows
s += '<g fill="none" stroke="#888" stroke-width="1.300"><path d="M655.500,790Q640,770 653.500,753"/><path d="M830.500,708.500Q815,688 828.500,672"/></g><g fill="#666"><path d="M655.500,749l-1,8-5.500-4z"/><path d="M830.500,668l-1,8-5.500-4z"/></g>';
// output axes
s += '<g font-size="12.500">';
for (let v=-6;v<=6;v++) {
  const x=1464.300+29.500*v, y=637-29.500*v, z=v===0;
  s += `<path d="M${x},814v8M1642,${y-.5}h8" stroke="${z?'#777':'#d4d4d4'}" stroke-width="1.300"/><g fill="${z?'#333':'#bbb'}"><text x="${v<0?x-1:x}" y="835.500" text-anchor="middle">${v}</text><text x="1653.500" y="${y+3.700}">${v}</text></g>`;
}
s += '</g>';
document.getElementById('net').innerHTML = s;

// --- Training points, index along each spiral arm ---
const blue=[1,4,6,8,10,12,14,17,22,24,28,30,37,38,46,52,53,55,57,59,60,61,64,66,67,68,47,77,78,79,80,85,86,88,90,94,95,96,101,102,107,108,109,110,115,118,119,116,120,123,125,127,128,129,132,133,134,135,136,138,141,142,143,151,154,156,157,158,160,162,163,164,165,167,168,169,170,171,173,175,176,177,178,179,181,183,186,188,189,191,192,195,199,201,204,206,207,208,211,212,213,214,219,220,223,224,225,227,228,229,230,232,233,239,242,246,247,248];
const orange=[8,10,13,19,24,28,32,36,40,42,44,49,51,53,55,47,57,60,62,64,66,70,72,75,77,79,83,85,91,92,93,94,95,98,99,101,105,107,110,111,112,113,117,120,122,123,125,127,129,131,133,135,137,139,144,146,149,150,153,154,155,156,158,160,162,163,167,168,169,170,173,177,178,179,180,182,183,185,187,191,193,194,195,196,198,199,200,201,203,207,209,210,212,213,214,216,217,218,220,221,222,223,225,226,227,228,229,232,233,234,235,237,239,240,242,244,246,247,249,3];
const dot=(i,o,c)=>{const r=i/50,t=.007*i*2*Math.PI+o;return `<circle cx="${(r*Math.sin(t)).toFixed(3)}" cy="${(-r*Math.cos(t)).toFixed(3)}" r=".13" fill="${c}" stroke="#fff" stroke-opacity=".8" stroke-width=".036"/>`;};
document.getElementById('dots').innerHTML = blue.map(i=>dot(i,0,'#1579bf')).join('') + orange.map(i=>dot(i,Math.PI,'#f7952d')).join('');

// --- Output heatmap ---
const lerp=(t,x)=>{ if(x<=t[0][0])return t[0][1]; for(let i=1;i<t.length;i++) if(x<=t[i][0]){const k=(x-t[i-1][0])/(t[i][0]-t[i-1][0]),a=t[i-1][1],b=t[i][1];return Array.isArray(a)?a.map((v,j)=>v+(b[j]-v)*k):a+(b-a)*k;} return t[t.length-1][1]; };
const mid=[[0,575],[100,612],[250,640],[350,625],[430,585],[480,545],[540,500],[620,465],[720,440],[850,445],[950,470],[1062,500]];
const wid=[[0,1],[300,.75],[450,.45],[560,.4],[680,.6],[850,.9],[1062,1.1]];
const up=[[0,[240,240,239]],[35,[239,236,231]],[70,[239,229,220]],[110,[239,224,207]],[160,[239,221,198]],[215,[241,218,190]]];
const dn=[[0,[240,240,239]],[25,[234,238,240]],[60,[226,233,238]],[105,[218,228,235]],[180,[208,223,234]],[300,[199,218,231]]];
const dnR=[[0,[240,240,239]],[30,[228,234,238]],[60,[214,226,235]],[110,[197,218,232]],[150,[191,215,231]]];
const l1=[[0,785],[150,740],[300,640],[400,560],[1062,560]], l2=[[0,935],[80,880],[200,770],[330,640],[420,590],[1062,590]];
const l3=[[560,450],[700,345],[870,300],[1062,232]], l4=[[0,2000],[337,1060],[380,920],[450,800],[530,748],[650,745],[850,790],[1062,835]];
const cv=document.getElementById('heat'), cx=cv.getContext('2d'), im=cx.createImageData(177,177);
const ease=(k,n)=>Math.max(0,Math.min(1,k/n)), mix=(a,b,k)=>a.map((v,j)=>v+(b[j]-v)*k);
for(let j=0;j<177;j++)for(let i=0;i<177;i++){
  const x=i*6,y=j*6,d=(y-lerp(mid,x))/lerp(wid,x); let c;
  if(d<0){ c=lerp(up,-d); if(x>lerp(l2,y)&&-d>105)c=[239,224,208]; else if(x>lerp(l1,y)&&-d>160)c=[239,221,199]; }
  else { c=mix(lerp(dn,d),lerp(dnR,d),ease(x-lerp(l3,y)+10,y<800?60:12)); if(x>337&&y>lerp(l4,x)&&d>100)c=[180,209,227]; }
  im.data.set([c[0],c[1],c[2],255],(j*177+i)*4);
}
cx.putImageData(im,0,0);

// --- Dataset thumbnails ---
let seed=7; const R=()=>(seed=(seed*16807)%2147483647)/2147483647;
const O='#f8e1cb',B='#c9deec',fr='<rect x=".75" y=".75" width="48.500" height="48.500" rx="2" fill="#f8f8f8" stroke="#f0f0f0" stroke-width="1.500"/>';
const sq=(x,y,c)=>`<rect x="${x.toFixed(1)}" y="${y.toFixed(1)}" width="1.700" height="1.700" fill="${c}"/>`;
let a=fr; for(let i=0;i<150;i++){let t=R()*6.283,r=15.5+R()*4.500;a+=sq(25+r*Math.cos(t),25+r*Math.sin(t),O);t=R()*6.283;r=R()*9.500;a+=sq(25+r*Math.cos(t),25+r*Math.sin(t),B);}
document.getElementById('d-circle').innerHTML=a;
a=fr; for(let i=0;i<300;i++){const x=5+R()*40,y=4+R()*41;if(Math.abs(x-25)<1||Math.abs(y-24)<1)continue;a+=sq(x,y,(x<25)===(y<24)?B:O);}
document.getElementById('d-xor').innerHTML=a;
a=fr; for(let i=0;i<170;i++){const t=R()*6.283,r=R()*R()*9;a+=sq(17.5+r*Math.cos(t),17+r*Math.sin(t),O)+sq(33+r*Math.sin(t),32+r*Math.cos(t),B);}
document.getElementById('d-gauss').innerHTML=a;
const arm=(o,c)=>{let p='';for(let i=0;i<250;i++){const r=i/250*20,t=.007*i*6.2832+o;p+=(i?'L':'M')+(26+r*Math.sin(t)).toFixed(1)+','+(26-r*Math.cos(t)).toFixed(1);}return `<path d="${p}" fill="none" stroke="${c}" stroke-width="1.900"/>`;};
document.getElementById('d-spiral').innerHTML='<rect x="1" y="1" width="48" height="48" rx="2" fill="#fff" stroke="#000" stroke-width="2"/>'+arm(0,'#0877bd')+arm(Math.PI,'#f59322');
</script>
</body>
</html>
